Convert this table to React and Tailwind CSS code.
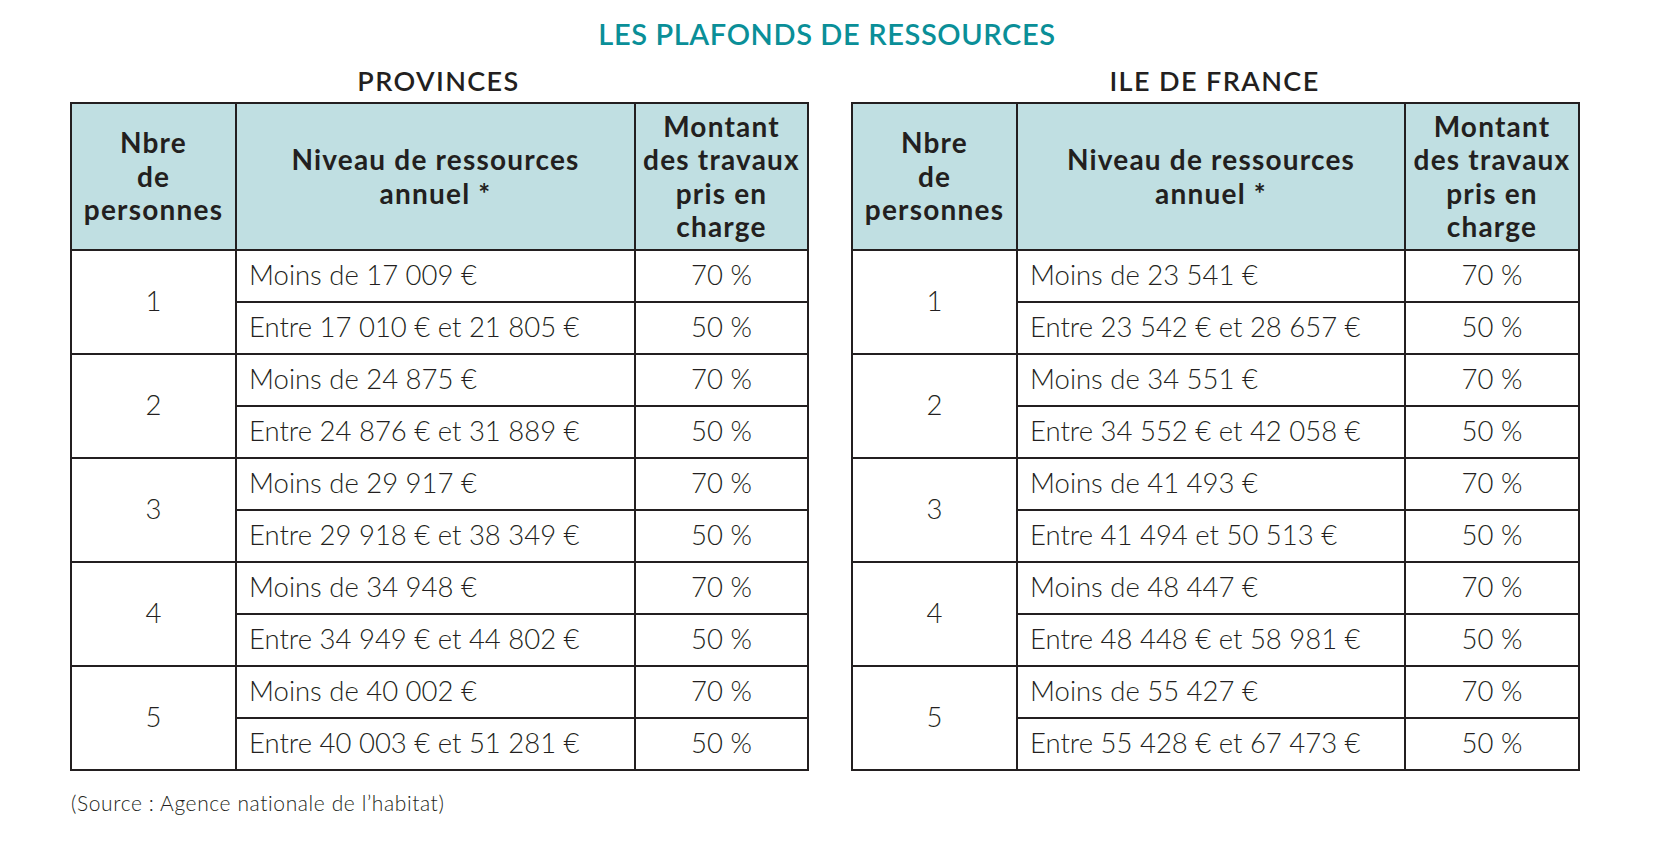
import React from 'react'

const provinces = [
    { n: '1', rows: ['Moins de 17 009 €', 'Entre 17 010 € et 21 805 €'] },
    { n: '2', rows: ['Moins de 24 875 €', 'Entre 24 876 € et 31 889 €'] },
    { n: '3', rows: ['Moins de 29 917 €', 'Entre 29 918 € et 38 349 €'] },
    { n: '4', rows: ['Moins de 34 948 €', 'Entre 34 949 € et 44 802 €'] },
    { n: '5', rows: ['Moins de 40 002 €', 'Entre 40 003 € et 51 281 €'] },
]

const ileDeFrance = [
    { n: '1', rows: ['Moins de 23 541 €', 'Entre 23 542 € et 28 657 €'] },
    { n: '2', rows: ['Moins de 34 551 €', 'Entre 34 552 € et 42 058 €'] },
    { n: '3', rows: ['Moins de 41 493 €', 'Entre 41 494 et 50 513 €'] },
    { n: '4', rows: ['Moins de 48 447 €', 'Entre 48 448 € et 58 981 €'] },
    { n: '5', rows: ['Moins de 55 427 €', 'Entre 55 428 € et 67 473 €'] },
]

const cell = 'border-2 border-[#231f20]'

const PlafondTable = ({ title, width, cols, data }) => (
    <div className="flex flex-col" style={{ width }}>
        <h2 className="h-[30px] mb-[6px] text-center text-[27px] leading-[30px] font-semibold tracking-[1.4px]">
            {title}
        </h2>
        <table className="table-fixed border-collapse w-full">
            <colgroup>
                {cols.map((w, i) => (
                    <col key={i} style={{ width: w }} />
                ))}
            </colgroup>
            <thead>
                <tr className="h-[147px] bg-[#c0dfe2] text-[28px] leading-[33.5px] tracking-[1.2px]">
                    <th className={`${cell} font-bold`}>
                        Nbre
                        <br />
                        de
                        <br />
                        personnes
                    </th>
                    <th className={`${cell} font-bold`}>
                        Niveau de ressources
                        <br />
                        annuel *
                    </th>
                    <th className={`${cell} font-bold`}>
                        Montant
                        <br />
                        des travaux
                        <br />
                        pris en
                        <br />
                        charge
                    </th>
                </tr>
            </thead>
            <tbody className="text-[27.5px] font-light">
                {data.map(group =>
                    group.rows.map((label, i) => (
                        <tr key={group.n + i} className="h-[52px]">
                            {i === 0 && (
                                <td rowSpan={2} className={`${cell} text-center pb-[2px]`}>
                                    {group.n}
                                </td>
                            )}
                            <td className={`${cell} pl-[12px] pb-[3px] whitespace-nowrap`}>
                                {label}
                            </td>
                            <td className={`${cell} text-center pb-[3px]`}>
                                {i === 0 ? '70 %' : '50 %'}
                            </td>
                        </tr>
                    ))
                )}
            </tbody>
        </table>
    </div>
)

export default function App() {
    return (
        <div
            className="w-[1658px] h-[860px] bg-white text-[#231f20]"
            style={{ fontFamily: 'Lato, "Open Sans", sans-serif' }}>
            <h1 className="pt-[17px] pr-[4px] h-[66px] text-center text-[29px] leading-[34px] font-semibold text-[#0a8f98] tracking-[0.6px]">
                LES PLAFONDS DE RESSOURCES
            </h1>
            <div className="flex gap-[44px] pl-[70px]">
                <PlafondTable
                    title="PROVINCES"
                    width={737}
                    cols={[165, 399, 173]}
                    data={provinces}
                />
                <PlafondTable
                    title="ILE DE FRANCE"
                    width={727}
                    cols={[165, 388, 174]}
                    data={ileDeFrance}
                />
            </div>
            <p className="pl-[71px] mt-[20px] text-[21px] font-light leading-[24px] tracking-[0.6px]">
                (Source : Agence nationale de l’habitat)
            </p>
        </div>
    )
}
